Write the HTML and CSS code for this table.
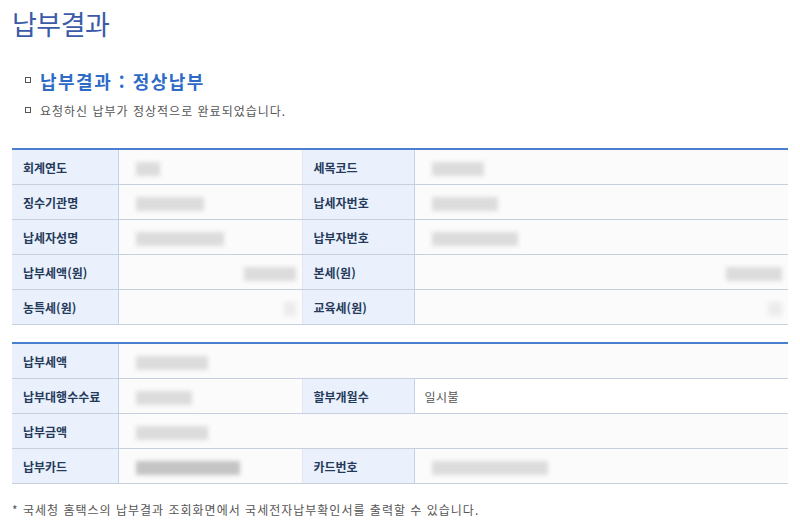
FILE: index.html
```html
<!DOCTYPE html>
<html lang="ko">
<head>
    <meta charset="UTF-8">
    <title>납부결과</title>
    <link rel="stylesheet" href="styles.css">
</head>
<body>
    <div class="page">
        <h1>납부결과</h1>

        <h2 class="bullet">납부결과 : 정상납부</h2>
        <p class="bullet msg">요청하신 납부가 정상적으로 완료되었습니다.</p>

        <table class="result">
            <colgroup>
                <col class="c-label"><col class="c-val"><col class="c-label2"><col>
            </colgroup>
            <tr>
                <th>회계연도</th>
                <td><span class="mask" style="width:24px"></span></td>
                <th>세목코드</th>
                <td><span class="mask" style="width:52px"></span></td>
            </tr>
            <tr>
                <th>징수기관명</th>
                <td><span class="mask" style="width:68px"></span></td>
                <th>납세자번호</th>
                <td><span class="mask" style="width:66px"></span></td>
            </tr>
            <tr>
                <th>납세자성명</th>
                <td><span class="mask" style="width:88px"></span></td>
                <th>납부자번호</th>
                <td><span class="mask" style="width:86px"></span></td>
            </tr>
            <tr>
                <th>납부세액(원)</th>
                <td class="num"><span class="mask" style="width:52px"></span></td>
                <th>본세(원)</th>
                <td class="num"><span class="mask" style="width:56px"></span></td>
            </tr>
            <tr>
                <th>농특세(원)</th>
                <td class="num"><span class="mask faint" style="width:12px"></span></td>
                <th>교육세(원)</th>
                <td class="num"><span class="mask faint" style="width:14px"></span></td>
            </tr>
        </table>

        <table class="result second">
            <colgroup>
                <col class="c-label"><col class="c-val"><col class="c-label2"><col>
            </colgroup>
            <tr>
                <th>납부세액</th>
                <td colspan="3"><span class="mask" style="width:72px"></span></td>
            </tr>
            <tr>
                <th>납부대행수수료</th>
                <td><span class="mask" style="width:56px"></span></td>
                <th>할부개월수</th>
                <td class="plain">일시불</td>
            </tr>
            <tr>
                <th>납부금액</th>
                <td colspan="3"><span class="mask" style="width:72px"></span></td>
            </tr>
            <tr>
                <th>납부카드</th>
                <td><span class="mask dark" style="width:104px"></span></td>
                <th>카드번호</th>
                <td><span class="mask" style="width:116px"></span></td>
            </tr>
        </table>

        <p class="note">* 국세청 홈택스의 납부결과 조회화면에서 국세전자납부확인서를 출력할 수 있습니다.</p>
    </div>
</body>
</html>
```

FILE: styles.css
```css
body {
    margin: 0;
    background: #fff;
    font-family: "Noto Sans CJK KR", "Noto Sans", sans-serif;
    color: #444;
}

.page {
    padding: 4px 12px 0 12px;
}

h1 {
    margin: 0;
    font-size: 27px;
    font-weight: 400;
    line-height: 40px;
    color: #3b5ba9;
    letter-spacing: -0.5px;
}

.bullet {
    position: relative;
    padding-left: 28px;
}

.bullet::before {
    content: "";
    position: absolute;
    left: 13px;
    width: 4px;
    height: 4px;
    border: 1.5px solid #555;
    background: #fff;
}

h2 {
    margin: 24px 0 0 0;
    font-size: 18px;
    line-height: 26px;
    font-weight: 700;
    color: #2d6bc6;
    letter-spacing: 1.5px;
}

h2::before {
    top: 9px;
}

.msg {
    margin: 8px 0 0 0;
    font-size: 12px;
    line-height: 18px;
    color: #555;
    letter-spacing: 1px;
}

.msg::before {
    top: 5px;
}

.result {
    width: 776px;
    border-collapse: collapse;
    table-layout: fixed;
    margin-top: 28px;
    border-top: 2px solid #4a7fd0;
    font-size: 12px;
}

.result.second {
    margin-top: 17px;
}

.c-label { width: 106px; }
.c-val { width: 184px; }
.c-label2 { width: 112px; }

.result th,
.result td {
    height: 34px;
    padding: 0 0 0 11px;
    border-bottom: 1px solid #c6d0de;
    text-align: left;
    vertical-align: middle;
}

.result th {
    background: #eaf1fc;
    color: #253a5a;
    font-weight: 700;
    border-right: 1px solid #c3d2e8;
}

.result td {
    background: #fbfbfc;
    border-right: 1px solid #e4e8ee;
}

.result td:last-child {
    border-right: none;
}

.result td.num {
    text-align: right;
    padding-right: 6px;
}

.result td.plain {
    background: #fff;
    color: #555;
    padding-left: 10px;
    letter-spacing: 0.5px;
}

.mask {
    display: inline-block;
    height: 14px;
    vertical-align: middle;
    background: #dcdcdc;
    filter: blur(2px);
    margin-left: 6px;
}

.mask.faint {
    background: #ececec;
}

.mask.dark {
    background: #c4c4c4;
}

.note {
    margin: 17px 0 0 0;
    font-size: 12px;
    color: #555;
    letter-spacing: 1px;
}
```
